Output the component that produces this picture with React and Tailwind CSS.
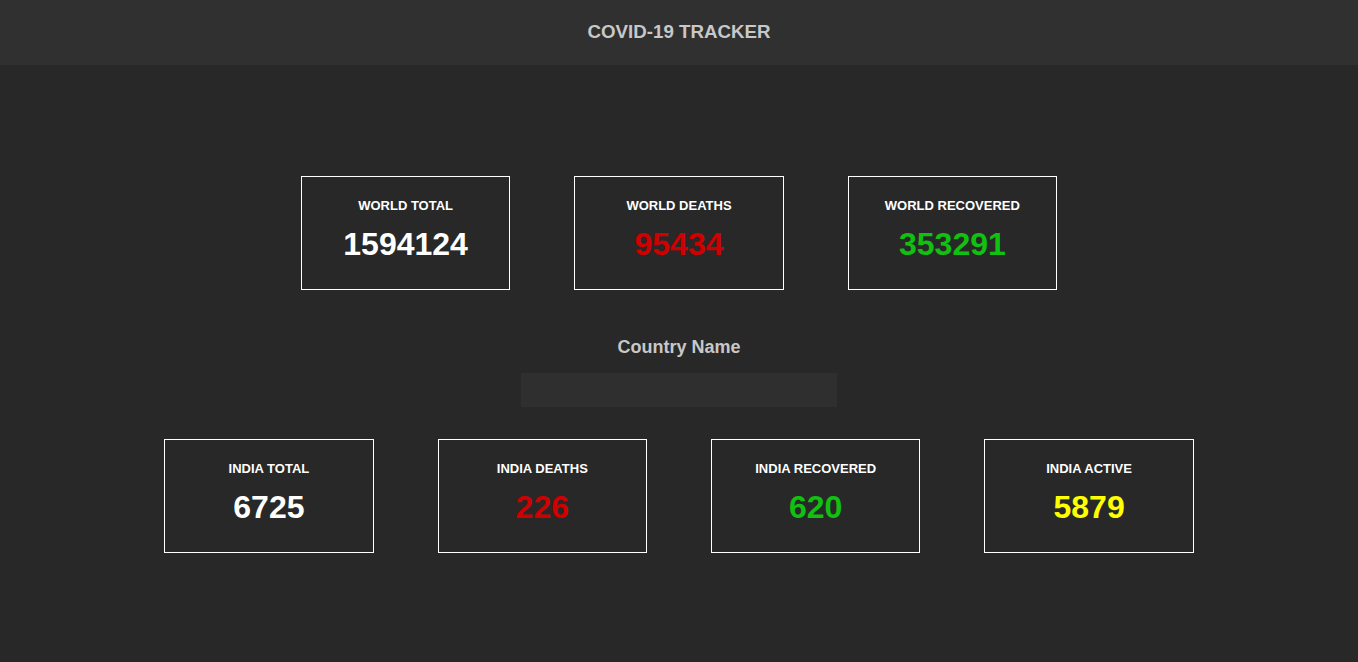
import React from "react";

function Card({ label, value, color }) {
  return (
    <div className="w-[209.4px] h-[114px] border border-white flex flex-col items-center pt-[21px] box-border">
      <div className="text-[13px] leading-[15px] font-bold text-white">{label}</div>
      <div className={`mt-[13px] text-[32px] leading-[37px] font-bold ${color}`}>{value}</div>
    </div>
  );
}

export default function App() {
  return (
    <div className="min-h-[662px] bg-[#282828] font-['Liberation_Sans',Arial,sans-serif]">
      <header className="h-[65px] bg-[#303030] flex items-center justify-center">
        <h1 className="text-[18.72px] font-bold text-[#c8c8c8] leading-[22px] pb-[2px]">COVID-19 TRACKER</h1>
      </header>
      <div className="pt-[111px] flex justify-center gap-[64px]">
        <Card label="WORLD TOTAL" value="1594124" color="text-white" />
        <Card label="WORLD DEATHS" value="95434" color="text-[#d10000]" />
        <Card label="WORLD RECOVERED" value="353291" color="text-[#11c011]" />
      </div>
      <div className="flex flex-col items-center mt-[47px]">
        <div className="text-[18px] leading-[21px] font-bold text-[#c8c8c8]">Country Name</div>
        <input className="mt-[15px] w-[316px] h-[34px] bg-[#2f2f2f] outline-none border-0 text-white px-2" />
      </div>
      <div className="mt-[32px] flex justify-center gap-[64px]">
        <Card label="INDIA TOTAL" value="6725" color="text-white" />
        <Card label="INDIA DEATHS" value="226" color="text-[#d10000]" />
        <Card label="INDIA RECOVERED" value="620" color="text-[#11c011]" />
        <Card label="INDIA ACTIVE" value="5879" color="text-[#ffff00]" />
      </div>
    </div>
  );
}
